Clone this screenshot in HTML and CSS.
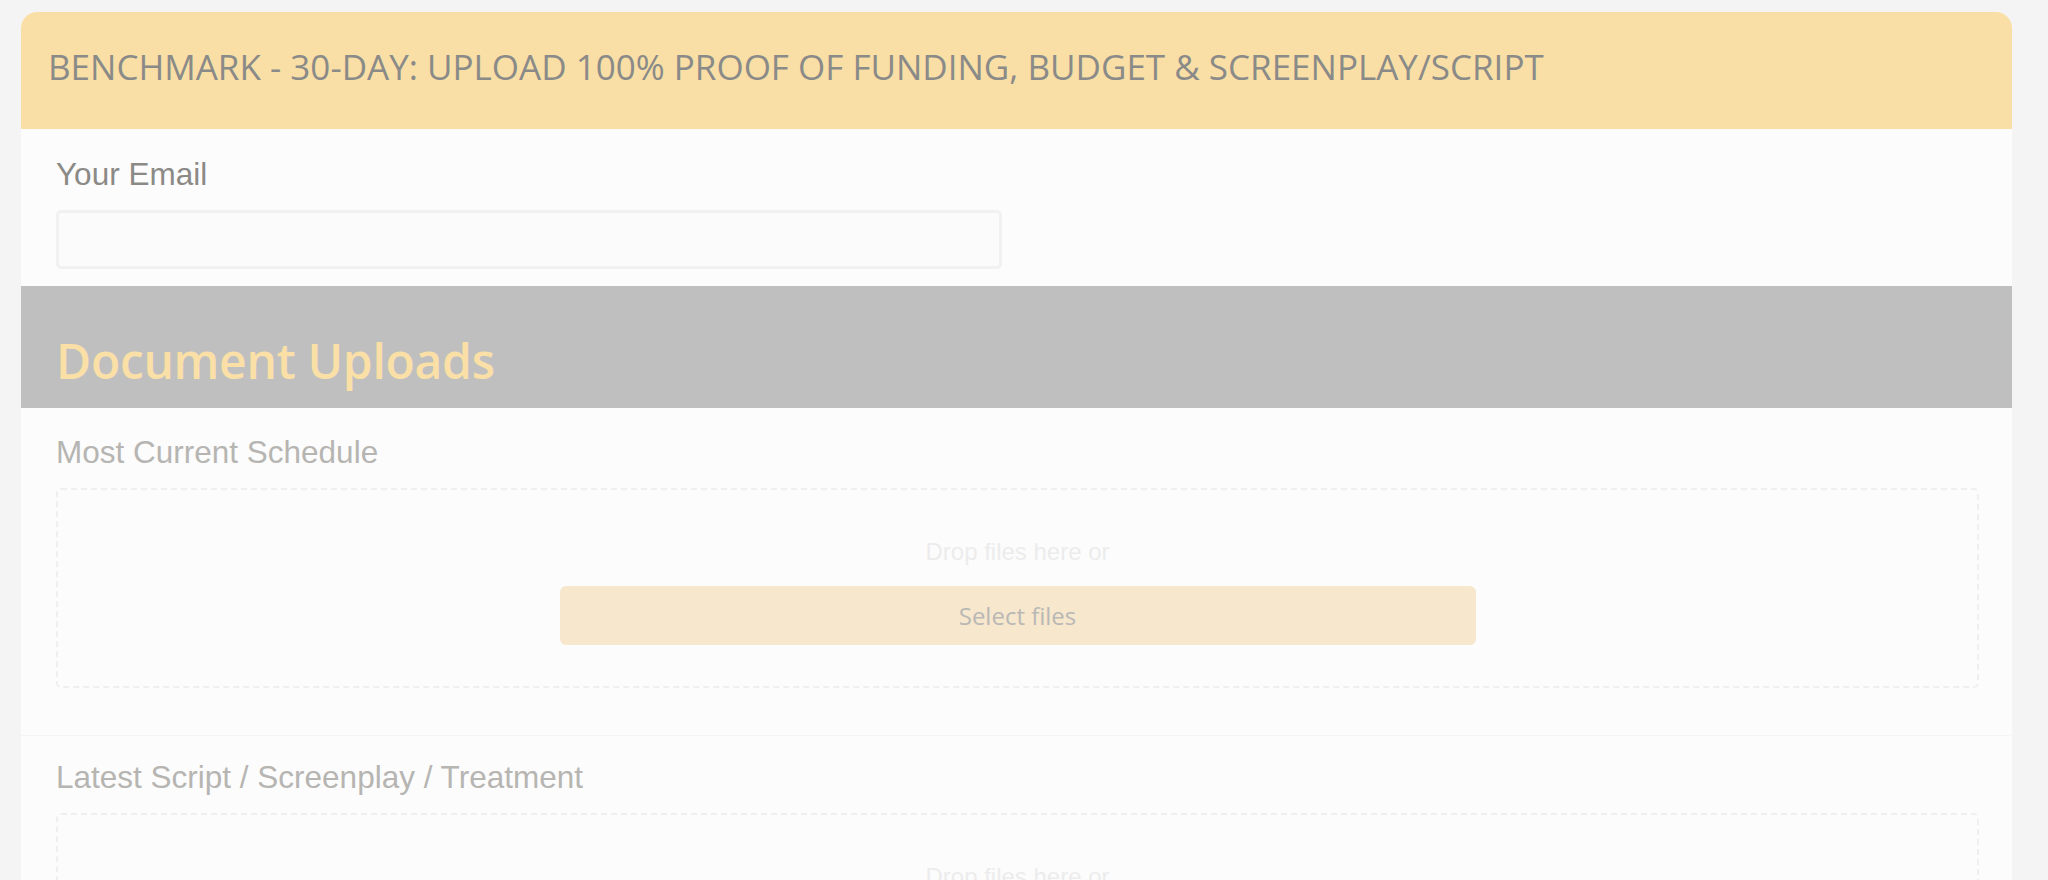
FILE: index.html
```html
<!DOCTYPE html>
<html lang="en">
<head>
  <meta charset="UTF-8">
  <title>Benchmark - 30-Day Upload</title>
  <link rel="stylesheet" href="styles.css">
</head>
<body>
  <div class="card">
    <div class="card-header">
      <h1>BENCHMARK - 30-DAY: UPLOAD 100% PROOF OF FUNDING, BUDGET &amp; SCREENPLAY/SCRIPT</h1>
    </div>

    <!-- Email -->
    <div class="email-field">
      <label class="label-dark" for="email">Your Email</label>
      <input class="text-input" id="email" type="email">
    </div>

    <!-- Section band -->
    <div class="section-band">
      <h2>Document Uploads</h2>
    </div>

    <div class="upload-field">
      <div class="label-light">Most Current Schedule</div>
      <div class="dropzone">
        <div class="drop-text">Drop files here or</div>
        <button class="select-btn">Select files</button>
      </div>
    </div>

    <div class="upload-field">
      <div class="label-light">Latest Script / Screenplay / Treatment</div>
      <div class="dropzone">
        <div class="drop-text">Drop files here or</div>
        <button class="select-btn">Select files</button>
      </div>
    </div>
  </div>
</body>
</html>
```

FILE: styles.css
```css
body {
  margin: 0;
  background: #f4f4f4;
  font-family: "Liberation Sans", Arial, sans-serif;
  height: 880px;
  overflow: hidden;
}

.card {
  margin: 12px 36px 0 21px;
  background: #fcfcfc;
  border-radius: 16px 16px 0 0;
  overflow: hidden;
}

.card-header {
  background: #f9dfa6;
  height: 117px;
  padding: 0 27px;
  display: flex;
  align-items: center;
}

.card-header h1 {
  margin: 0 0 8px;
  font-family: "Open Sans", sans-serif;
  font-weight: 400;
  font-size: 35px;
  color: #8a8a88;
}

.email-field {
  padding: 28px 35px 17px;
}

.label-dark,
.label-light {
  display: block;
  font-size: 31.5px;
  line-height: 34px;
}

.label-dark { color: #8b8a86; }
.label-light { color: #b6b5b2; }

.text-input {
  display: block;
  box-sizing: border-box;
  margin-top: 19px;
  width: 946px;
  height: 59px;
  border: 3px solid #f1f1f1;
  border-radius: 5px;
  background: #fbfbfb;
}

.section-band {
  background: #bfbfbf;
  height: 122px;
  padding: 46px 35px 0;
  box-sizing: border-box;
}

.section-band h2 {
  margin: 0;
  font-family: "Open Sans", sans-serif;
  font-weight: 600;
  font-size: 48px;
  line-height: 58px;
  color: #fae0a7;
  letter-spacing: -0.3px;
}

.upload-field {
  padding: 27px 33px 47px 35px;
  border-bottom: 1px dotted #efefef;
}

.upload-field + .upload-field {
  padding-top: 24px;
}

.upload-field .dropzone {
  margin-top: 19px;
}

.dropzone {
  box-sizing: border-box;
  height: 200px;
  border: 2px dashed #efefef;
  border-radius: 5px;
  padding-top: 47px;
  display: flex;
  flex-direction: column;
  align-items: center;
}

.drop-text {
  font-size: 24px;
  line-height: 30px;
  color: #ececec;
}

.select-btn {
  margin-top: 19px;
  width: 916px;
  height: 59px;
  border: none;
  border-radius: 6px;
  background: #f7e7cd;
  font-family: "Open Sans", sans-serif;
  font-size: 24px;
  color: #b9b8b5;
}
```
